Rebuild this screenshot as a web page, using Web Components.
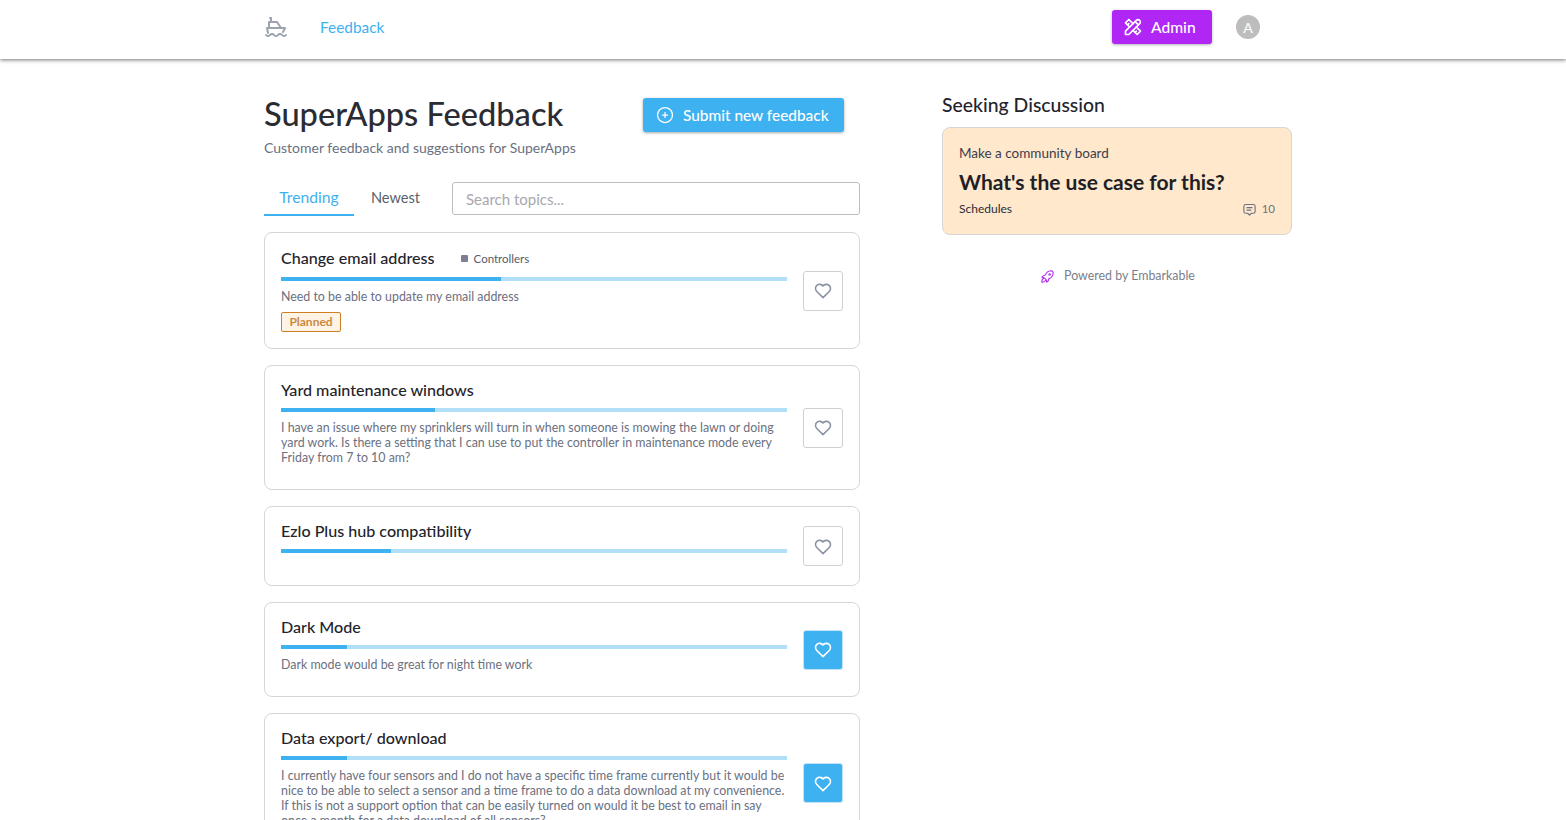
<!DOCTYPE html>
<html lang="en">
<head>
<meta charset="utf-8">
<title>SuperApps Feedback</title>
<style>
  html, body { margin: 0; height: 100%; overflow: hidden; background: #fff; }
  body { font-family: Lato, "Open Sans", sans-serif; color: #2b2b33; }
</style>
</head>
<body>
<app-shell>
  <app-header slot="header"></app-header>

  <page-heading slot="main"></page-heading>
  <topic-tabs slot="main"></topic-tabs>

  <feedback-card slot="main" heading="Change email address" category="Controllers" progress="220" status="Planned">Need to be able to update my email address</feedback-card>
  <feedback-card slot="main" heading="Yard maintenance windows" progress="154">I have an issue where my sprinklers will turn in when someone is mowing the lawn or doing yard work. Is there a setting that I can use to put the controller in maintenance mode every Friday from 7 to 10 am?</feedback-card>
  <feedback-card slot="main" heading="Ezlo Plus hub compatibility" progress="110" empty></feedback-card>
  <feedback-card slot="main" heading="Dark Mode" progress="66" liked>Dark mode would be great for night time work</feedback-card>
  <feedback-card slot="main" heading="Data export/ download" progress="66" liked>I currently have four sensors and I do not have a specific time frame currently but it would be nice to be able to select a sensor and a time frame to do a data download at my convenience. If this is not a support option that can be easily turned on would it be best to email in say once a month for a data download of all sensors?</feedback-card>

  <discussion-panel slot="side"></discussion-panel>
</app-shell>

<script>
const ICONS = {
  ship: '<path d="M2 20a2.4 2.4 0 0 0 2 1a2.4 2.4 0 0 0 2 -1a2.4 2.4 0 0 1 2 -1a2.4 2.4 0 0 1 2 1a2.4 2.4 0 0 0 2 1a2.4 2.4 0 0 0 2 -1a2.4 2.4 0 0 1 2 -1a2.4 2.4 0 0 1 2 1a2.4 2.4 0 0 0 2 1a2.4 2.4 0 0 0 2 -1"/><path d="M4 18l-1 -5h18l-2 4"/><path d="M5 13v-6h8l4 6"/><path d="M7 7v-4h-1"/>',
  tools: '<path d="M3 21h4l13 -13a1.5 1.5 0 0 0 -4 -4l-13 13v4"/><path d="M14.5 5.5l4 4"/><path d="M12 8l-5 -5l-4 4l5 5"/><path d="M7 8l-1.5 1.5"/><path d="M16 12l5 5l-4 4l-5 -5"/><path d="M16 17l-1.5 1.5"/>',
  plus: '<circle cx="12" cy="12" r="9"/><path d="M9 12h6"/><path d="M12 9v6"/>',
  heart: '<path d="M19.5 12.572l-7.5 7.428l-7.5 -7.428a5 5 0 1 1 7.5 -6.566a5 5 0 1 1 7.5 6.572"/>',
  rocket: '<path d="M4 13a8 8 0 0 1 7 7a6 6 0 0 0 3 -5a9 9 0 0 0 6 -8a3 3 0 0 0 -3 -3a9 9 0 0 0 -8 6a6 6 0 0 0 -5 3"/><path d="M7 14a6 6 0 0 0 -3 6a6 6 0 0 0 6 -3"/><circle cx="15" cy="9" r="1"/>',
  message: '<path d="M8 9h8"/><path d="M8 13h6"/><path d="M9 18h-3a3 3 0 0 1 -3 -3v-8a3 3 0 0 1 3 -3h12a3 3 0 0 1 3 3v8a3 3 0 0 1 -3 3h-3l-3 3l-3 -3z"/>'
};

class UiIcon extends HTMLElement {
  connectedCallback() {
    const size = this.getAttribute('size') || 24;
    const stroke = this.getAttribute('stroke') || 2;
    this.attachShadow({ mode: 'open' });
    this.shadowRoot.innerHTML = `
      <style>
        :host { display: inline-flex; flex: none; }
      </style>
      <svg width="${size}" height="${size}" viewBox="0 0 24 24" fill="none" stroke="currentColor"
           stroke-width="${stroke}" stroke-linecap="round" stroke-linejoin="round">${ICONS[this.getAttribute('name')]}</svg>
    `;
  }
}

class AppShell extends HTMLElement {
  connectedCallback() {
    this.attachShadow({ mode: 'open' });
    this.shadowRoot.innerHTML = `
      <style>
        :host { display: block; }
        .content {
          width: 1038px;
          margin: 0 auto;
          display: grid;
          grid-template-columns: 596px 350px;
          column-gap: 82px;
        }
        .main { display: flex; flex-direction: column; padding-top: 36px; }
        .side { padding-top: 34px; }
      </style>
      <slot name="header"></slot>
      <div class="content">
        <div class="main"><slot name="main"></slot></div>
        <div class="side"><slot name="side"></slot></div>
      </div>
    `;
  }
}

class AppHeader extends HTMLElement {
  connectedCallback() {
    this.attachShadow({ mode: 'open' });
    this.shadowRoot.innerHTML = `
      <style>
        :host {
          display: block;
          height: 59px;
          background: #fff;
          box-shadow: 0 1px 4px rgba(0, 0, 0, 0.55);
          position: relative;
        }
        .bar {
          width: 1038px;
          height: 54px;
          margin: 0 auto;
          display: flex;
          align-items: center;
        }
        .logo { display: flex; width: 56px; color: #9ca3af; }
        a { font-size: 15.4px; color: #3eb1f0; text-decoration: none; }
        .admin {
          margin-left: auto;
          margin-right: 24px;
          width: 100px;
          height: 34px;
          padding: 0 0 0 11px;
          box-sizing: border-box;
          border: 0;
          border-radius: 3px;
          background: #b026f5;
          color: #fff;
          font: 500 15.6px Lato, sans-serif;
          display: flex;
          align-items: center;
          gap: 8px;
          box-shadow: 0 1px 3px rgba(0, 0, 0, 0.3);
        }
        .avatar {
          width: 24px;
          height: 24px;
          margin-right: 42px;
          border-radius: 50%;
          background: #bdbdbd;
          color: #fff;
          font-size: 14px;
          font-weight: 500;
          display: flex;
          align-items: center;
          justify-content: center;
        }
      </style>
      <div class="bar">
        <span class="logo"><ui-icon name="ship" size="24" stroke="2"></ui-icon></span>
        <a href="#feedback">Feedback</a>
        <button class="admin"><ui-icon name="tools" size="20"></ui-icon>Admin</button>
        <span class="avatar">A</span>
      </div>
    `;
  }
}

class PageHeading extends HTMLElement {
  connectedCallback() {
    this.attachShadow({ mode: 'open' });
    this.shadowRoot.innerHTML = `
      <style>
        :host { display: flex; justify-content: space-between; align-items: flex-start; }
        h1 { margin: 0; font-size: 32.6px; line-height: 38px; font-weight: 500; color: #2b2b33; }
        p { margin: 5px 0 0; font-size: 14px; line-height: 20px; color: #6b7080; }
        button {
          margin: 3px 16px 0 0;
          width: 201px;
          height: 34px;
          padding: 0 0 0 12px;
          border: 0;
          border-radius: 3px;
          background: #3eb1f0;
          color: #fff;
          font: 500 15.4px Lato, sans-serif;
          display: flex;
          align-items: center;
          gap: 8px;
          box-shadow: 0 1px 3px rgba(0, 0, 0, 0.35);
        }
      </style>
      <div>
        <h1>SuperApps Feedback</h1>
        <p>Customer feedback and suggestions for SuperApps</p>
      </div>
      <button><ui-icon name="plus" size="20" stroke="1.5"></ui-icon>Submit new feedback</button>
    `;
  }
}

class TopicTabs extends HTMLElement {
  connectedCallback() {
    this.attachShadow({ mode: 'open' });
    this.shadowRoot.innerHTML = `
      <style>
        :host { display: flex; align-items: stretch; margin: 24px 0 16px; height: 34px; }
        .tab {
          height: 30px;
          padding-bottom: 2px;
          display: flex;
          align-items: center;
          justify-content: center;
          color: #5a5f6c;
        }
        .tab.on { width: 90px; font-size: 15.7px; color: #3eb1f0; border-bottom: 2px solid #3eb1f0; }
        .tab.off { width: 83px; margin-right: 15px; font-size: 14.6px; }
        input {
          flex: 1;
          min-width: 0;
          height: 33px;
          box-sizing: border-box;
          padding: 0 13px;
          border: 1px solid #bdbdbd;
          border-radius: 3px;
          font: 15px Lato, sans-serif;
          outline: none;
        }
        input::placeholder { color: #a8a8ad; opacity: 1; }
      </style>
      <div class="tab on">Trending</div>
      <div class="tab off">Newest</div>
      <input placeholder="Search topics...">
    `;
  }
}

class FeedbackCard extends HTMLElement {
  connectedCallback() {
    const category = this.getAttribute('category');
    const status = this.getAttribute('status');
    this.attachShadow({ mode: 'open' });
    this.shadowRoot.innerHTML = `
      <style>
        :host {
          display: flex;
          align-items: center;
          gap: 16px;
          margin-bottom: 16px;
          padding: 16px;
          background: #fff;
          border: 1px solid #d6d6d6;
          border-radius: 8px;
          box-sizing: border-box;
        }
        .body { flex: 1; min-width: 0; }
        .top { display: flex; align-items: flex-start; min-height: 18px; margin-bottom: 8px; }
        .top.tall { min-height: 20px; }
        h3 { margin: 0; font-size: 16.1px; line-height: 16px; font-weight: 500; color: #23232b; }
        .top.tall h3 { line-height: 18px; }
        .cat { display: flex; align-items: center; gap: 6px; height: 18px; margin-left: 26px; font-size: 11.5px; color: #565b6a; }
        .cat i { width: 7px; height: 7px; background: #7c7f92; border-radius: 1px; }
        .track { height: 4px; background: #b2dff8; }
        .fill { height: 4px; background: #3eb1f0; }
        .desc { margin: 8px 0; font-size: 12.4px; line-height: 15px; color: #6b7080; }
        .desc.none { margin: 0; height: 16px; }
        .badge {
          width: 60px;
          height: 20px;
          padding-bottom: 1px;
          box-sizing: border-box;
          border: 1px solid #cc8023;
          border-radius: 2px;
          background: #fff3e6;
          color: #c98a3f;
          font-size: 12px;
          font-weight: 700;
          display: flex;
          align-items: center;
          justify-content: center;
        }
        .vote {
          width: 40px;
          height: 40px;
          flex: none;
          padding: 1px 0 0;
          box-sizing: border-box;
          border: 1px solid #cfcfd4;
          border-radius: 3px;
          background: #fff;
          color: #8a93a3;
          display: flex;
          align-items: center;
          justify-content: center;
        }
        :host([liked]) .vote { background: #3eb1f0; color: #fff; border-color: #c5e3f5; }
      </style>
      <div class="body">
        <div class="top${category ? ' tall' : ''}">
          <h3>${this.getAttribute('heading')}</h3>
          ${category ? `<span class="cat"><i></i>${category}</span>` : ''}
        </div>
        <div class="track"><div class="fill" style="width:${this.getAttribute('progress')}px"></div></div>
        <div class="desc${this.hasAttribute('empty') ? ' none' : ''}"><slot></slot></div>
        ${status ? `<div class="badge">${status}</div>` : ''}
      </div>
      <button class="vote"><ui-icon name="heart" size="20" stroke="1.9"></ui-icon></button>
    `;
  }
}

class DiscussionPanel extends HTMLElement {
  connectedCallback() {
    this.attachShadow({ mode: 'open' });
    this.shadowRoot.innerHTML = `
      <style>
        :host { display: block; }
        h2 { margin: 0 0 11px; font-size: 19.4px; line-height: 23px; font-weight: 500; color: #23232b; }
        .board {
          height: 108px;
          box-sizing: border-box;
          padding: 16px 16px 0;
          background: #ffe8cc;
          border: 1px solid #d9d6d2;
          border-radius: 8px;
        }
        .kicker { font-size: 13.5px; line-height: 18px; color: #3d3d4a; }
        .question { margin-top: 7px; font-size: 21px; line-height: 26px; font-weight: 700; color: #1f1f27; }
        .meta { display: flex; align-items: center; justify-content: space-between; margin-top: 6px; font-size: 12px; line-height: 16px; color: #2b2b33; }
        .count { display: flex; align-items: center; gap: 5px; font-size: 11.5px; color: #6b7080; }
        .powered { display: flex; align-items: center; justify-content: center; gap: 8px; margin-top: 32px; font-size: 12.4px; line-height: 18px; color: #7a7e8c; }
        .powered ui-icon { color: #b026f5; }
      </style>
      <h2>Seeking Discussion</h2>
      <div class="board">
        <div class="kicker">Make a community board</div>
        <div class="question">What's the use case for this?</div>
        <div class="meta">
          <span>Schedules</span>
          <span class="count"><ui-icon name="message" size="15" stroke="1.75"></ui-icon>10</span>
        </div>
      </div>
      <div class="powered"><ui-icon name="rocket" size="17" stroke="1.5"></ui-icon>Powered by Embarkable</div>
    `;
  }
}

customElements.define('ui-icon', UiIcon);
customElements.define('app-shell', AppShell);
customElements.define('app-header', AppHeader);
customElements.define('page-heading', PageHeading);
customElements.define('topic-tabs', TopicTabs);
customElements.define('feedback-card', FeedbackCard);
customElements.define('discussion-panel', DiscussionPanel);
</script>
</body>
</html>
